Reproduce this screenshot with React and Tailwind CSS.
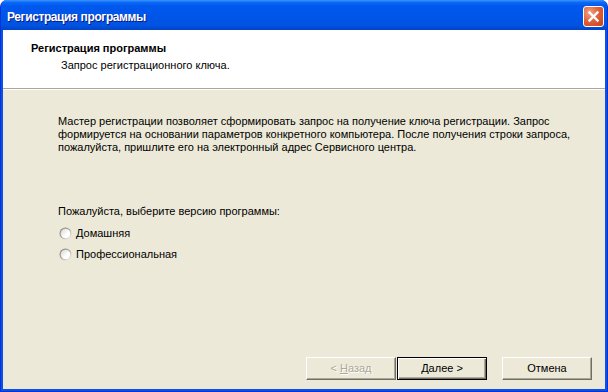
import React from 'react';

const font = "font-['Tahoma','Liberation_Sans',sans-serif]";

const Radio = ({ label }) => (
  <div className="flex items-center h-[13px] gap-[4px]">
    <svg width="13" height="13" viewBox="0 0 13 13">
      <defs>
        <linearGradient id="rfill" x1="0" y1="0" x2="1" y2="1">
          <stop offset="0" stopColor="#d6d4ca" />
          <stop offset="0.6" stopColor="#ffffff" />
        </linearGradient>
        <linearGradient id="rring" x1="0" y1="0" x2="1" y2="1">
          <stop offset="0" stopColor="#7e7d78" />
          <stop offset="0.55" stopColor="#b0aea5" />
          <stop offset="1" stopColor="#ffffff" />
        </linearGradient>
      </defs>
      <circle cx="6.5" cy="6.5" r="6" fill="url(#rring)" />
      <circle cx="6.5" cy="6.5" r="4.8" fill="url(#rfill)" />
    </svg>
    <span className="leading-[13px]">{label}</span>
  </div>
);

const Btn = ({ children, def, disabled }) => (
  <button
    className={
      'w-[90px] h-[23px] text-[11px] leading-none bg-[#ECE9D8] ' +
      (def
        ? 'border border-black shadow-[inset_1px_1px_0_#ffffff,inset_-1px_-1px_0_#716F64,inset_-2px_-2px_0_#ACA899] text-black'
        : disabled
        ? 'border border-t-white border-l-white border-r-[#716F64] border-b-[#716F64] shadow-[inset_-1px_-1px_0_#ACA899] text-[#ACA899] [text-shadow:1px_1px_0_#ffffff]'
        : 'border border-t-white border-l-white border-r-[#716F64] border-b-[#716F64] shadow-[inset_-1px_-1px_0_#ACA899] text-black')
    }
  >
    {children}
  </button>
);

export default function App() {
  return (
    <div className={`w-[608px] h-[392px] bg-white ${font} text-[11px] text-black`}>
      <div className="w-full h-full flex flex-col rounded-t-[7px] overflow-hidden bg-[#0A52E6] border-l border-r border-b border-[#0831D9]">
        {/* title bar */}
        <div className="h-[30px] shrink-0 flex justify-between items-start pt-[6px] pl-[6px] pr-[3px] bg-[linear-gradient(#3D95FF_0%,#0A6AF8_8%,#0058EE_20%,#0055E8_60%,#0053E0_85%,#0043C8_100%)]">
          <span className="text-[12px] font-bold leading-[22px] text-white tracking-[-0.4px] [text-shadow:1px_1px_0_#0A1883] font-['Liberation_Sans',sans-serif]">
            Регистрация программы
          </span>
          <div className="w-[21px] h-[21px] rounded-[3px] border border-white flex items-center justify-center bg-[radial-gradient(circle_at_30%_30%,#F2A386_0%,#E2623B_45%,#C3401A_100%)]">
            <svg width="13" height="13" viewBox="0 0 13 13">
              <path d="M2.5 2.5 L10.5 10.5 M10.5 2.5 L2.5 10.5" stroke="#ffffff" strokeWidth="2.4" strokeLinecap="square" />
            </svg>
          </div>
        </div>
        {/* content */}
        <div className="flex-1 flex flex-col ml-[2px] mr-[2px] mb-[2px]">
          <div className="h-[58px] shrink-0 bg-white pt-[12px] pl-[28px]">
            <div className="font-bold leading-[13px]">Регистрация программы</div>
            <div className="leading-[13px] pl-[30px] mt-[4px]">Запрос регистрационного ключа.</div>
          </div>
          <div className="h-px bg-[#ACA899]" />
          <div className="h-px bg-white" />
          <div className="flex-1 flex flex-col bg-[#ECE9D8]">
            <div className="pt-[25px] pl-[55px] leading-[13px]">
              <p>
                Мастер регистрации позволяет сформировать запрос на получение ключа регистрации. Запрос
                <br />
                формируется на основании параметров конкретного компьютера. После получения строки запроса,
                <br />
                пожалуйста, пришлите его на электронный адрес Сервисного центра.
              </p>
              <p className="mt-[51px]">Пожалуйста, выберите версию программы:</p>
              <div className="flex flex-col gap-[8px] mt-[9px] pl-[1px]">
                <Radio label="Домашняя" />
                <Radio label="Профессиональная" />
              </div>
            </div>
            <div className="flex-1" />
            <div className="flex justify-end pr-[13px] pb-[9px]">
              <Btn disabled>
                &lt; <span className="underline">Н</span>азад
              </Btn>
              <div className="ml-px">
                <Btn def>
                  <span className="underline">Д</span>алее &gt;
                </Btn>
              </div>
              <div className="ml-[15px]">
                <Btn>Отмена</Btn>
              </div>
            </div>
          </div>
        </div>
      </div>
    </div>
  );
}
